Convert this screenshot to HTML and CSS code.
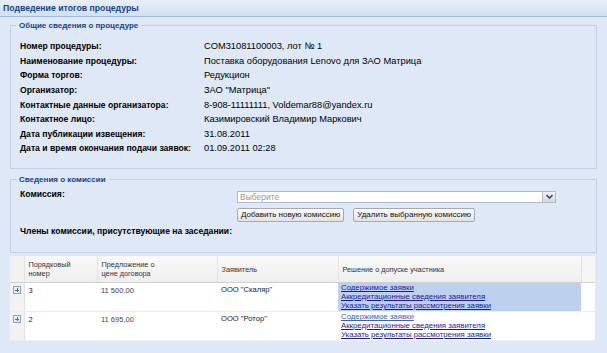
FILE: index.html
```html
<!DOCTYPE html>
<html lang="ru">
<head>
  <meta charset="UTF-8" />
  <title>Подведение итогов процедуры</title>
<link rel="stylesheet" href="styles.css">
</head>
<body>
  <div class="panel-header">Подведение итогов процедуры</div>

  <fieldset class="box info">
    <legend>Общие сведения о процедуре</legend>
    <table class="details">
      <tr><th>Номер процедуры:</th><td>COM31081100003, лот № 1</td></tr>
      <tr><th>Наименование процедуры:</th><td>Поставка оборудования Lenovo для ЗАО Матрица</td></tr>
      <tr><th>Форма торгов:</th><td>Редукцион</td></tr>
      <tr><th>Организатор:</th><td>ЗАО "Матрица"</td></tr>
      <tr><th>Контактные данные организатора:</th><td>8-908-11111111, Voldemar88@yandex.ru</td></tr>
      <tr><th>Контактное лицо:</th><td>Казимировский Владимир Маркович</td></tr>
      <tr><th>Дата публикации извещения:</th><td>31.08.2011</td></tr>
      <tr><th>Дата и время окончания подачи заявок:</th><td>01.09.2011 02:28</td></tr>
    </table>
  </fieldset>

  <fieldset class="box commission">
    <legend>Сведения о комиссии</legend>
    <div class="form-row">
      <label class="field-label">Комиссия:</label>
      <div class="field">
        <div class="combo">
          <span class="combo-text">Выберите</span>
          <span class="combo-trigger">
            <svg width="7" height="5" viewBox="0 0 7 5"><path d="M0.5 1 L3.5 4 L6.5 1" fill="none" stroke="#2b4b8f" stroke-width="1.6"/></svg>
          </span>
        </div>
        <div class="buttons">
          <button class="btn">Добавить новую комиссию</button>
          <button class="btn">Удалить выбранную комиссию</button>
        </div>
      </div>
    </div>
    <div class="field-label members">Члены комиссии, присутствующие на заседании:</div>
  </fieldset>

  <table class="grid">
    <colgroup>
      <col style="width:14px">
      <col style="width:73px">
      <col style="width:120px">
      <col style="width:121px">
      <col style="width:243px">
      <col style="width:14px">
    </colgroup>
    <thead>
      <tr>
        <th class="exp"></th>
        <th>Порядковый<br>номер</th>
        <th>Предложение о<br>цене договора</th>
        <th>Заявитель</th>
        <th>Решение о допуске участника</th>
        <th class="last"></th>
      </tr>
    </thead>
    <tbody>
      <tr>
        <td class="exp"><span class="plus"></span></td>
        <td>3</td>
        <td class="price">11 500,00</td>
        <td class="company">ООО "Скаляр"</td>
        <td class="links selected">
          <a href="#">Содержимое заявки</a>
          <a href="#">Аккредитационные сведения заявителя</a>
          <a href="#">Указать результаты рассмотрения заявки</a>
        </td>
        <td class="last"></td>
      </tr>
      <tr>
        <td class="exp"><span class="plus"></span></td>
        <td>2</td>
        <td class="price">11 695,00</td>
        <td class="company">ООО "Ротор"</td>
        <td class="links">
          <a href="#" class="visited">Содержимое заявки</a>
          <a href="#">Аккредитационные сведения заявителя</a>
          <a href="#">Указать результаты рассмотрения заявки</a>
        </td>
        <td class="last"></td>
      </tr>
    </tbody>
  </table>
</body>
</html>
```

FILE: styles.css
```css
body {
  margin: 0;
  background: #dfe8f6;
  font-family: "Liberation Sans", Arial, sans-serif;
  font-size: 9.3px;
  color: #000;
  width: 607px;
  height: 353px;
  overflow: hidden;
}

.panel-header {
  height: 16px;
  line-height: 17px;
  padding-left: 3px;
  font-weight: bold;
  font-size: 8.7px;
  color: #15428b;
  background: linear-gradient(#e9eff8, #d2e0f2);
  border-bottom: 1px solid #99bbe8;
}

.box {
  margin: 4px 10px 0;
  padding: 9px 9px 12px;
  border: 1px solid #c3cfe2;
  min-width: 0;
}

.box legend {
  padding: 0 3px;
  margin-left: -4px;
  font-weight: bold;
  font-size: 8px;
  color: #15428b;
}

.details {
  border-collapse: collapse;
}

.details th,
.details td {
  height: 14.6px;
  padding: 0;
  text-align: left;
  white-space: nowrap;
}

.details th {
  width: 184px;
  font-size: 8.6px;
}

.commission {
  margin-top: 6px;
  padding-top: 5px;
  padding-bottom: 16px;
}

.form-row {
  display: flex;
}

.field-label {
  width: 217px;
  font-weight: bold;
  font-size: 8.6px;
}

.combo {
  display: flex;
  width: 319px;
  height: 12px;
  margin-top: 2px;
  background: #fff;
  border: 1px solid #b5b8c8;
  box-sizing: border-box;
}

.combo-text {
  flex: 1;
  padding-left: 2px;
  line-height: 10px;
  color: #999;
  font-size: 8.5px;
}

.combo-trigger {
  width: 12px;
  display: flex;
  align-items: center;
  justify-content: center;
  background: linear-gradient(#f4f4f4, #d8d8d8);
  border-left: 1px solid #b5b8c8;
}

.buttons {
  display: flex;
  gap: 9px;
  margin-top: 5px;
}

.btn {
  height: 14px;
  padding: 0 3px;
  font-family: inherit;
  font-size: 8px;
  color: #111;
  background: linear-gradient(#fdfdfd, #e2e2e2);
  border: 1px solid #a9a9a9;
  border-radius: 2px;
  line-height: 12px;
}

.members {
  width: auto;
  margin-top: 4px;
}

.grid {
  margin: 3px 0 0 10px;
  width: 585px;
  border-collapse: collapse;
  table-layout: fixed;
  background: #fff;
  font-size: 7.5px;
}

.grid thead tr {
  height: 27px;
}

.grid tbody tr {
  height: 29px;
}

.grid th {
  padding: 0 4px;
  text-align: left;
  font-weight: normal;
  color: #333;
  font-size: 7.3px;
  line-height: 9px;
  background: linear-gradient(#f9f9f9, #eeeeee);
  border-left: 1px solid #e2e2e2;
  border-bottom: 1px solid #d0d0d0;
}

.grid td {
  padding: 3px 4px 0;
  vertical-align: top;
  border-bottom: 1px solid #ededed;
  color: #222;
}

.grid .exp {
  padding: 3px 0 0 3px;
  background: #f2f2f2;
  border-left: none;
  border-right: 1px solid #e2e2e2;
}

.grid th.exp {
  background: #f2f2f2;
}

.grid .last {
  background: #fff;
}

.grid th.last {
  background: #f5f5f5;
}

.plus {
  display: inline-block;
  width: 6px;
  height: 6px;
  border: 1px solid #8ea3c4;
  background:
    linear-gradient(#4d6a9a, #4d6a9a) center / 4px 1px no-repeat,
    linear-gradient(#4d6a9a, #4d6a9a) center / 1px 4px no-repeat,
    #e8eef7;
}

.grid td.price {
  color: #444;
}

.grid td.company {
  font-size: 7.6px;
  padding-top: 2px;
}

.grid td.links {
  padding: 1px 3px 0;
  font-size: 7.8px;
  line-height: 8.8px;
}

.grid td.selected {
  background: #bdd1ef;
}

.links a {
  display: block;
  color: #1a1aa6;
  white-space: nowrap;
}

.links a.visited {
  color: #3a5fc8;
}
```
